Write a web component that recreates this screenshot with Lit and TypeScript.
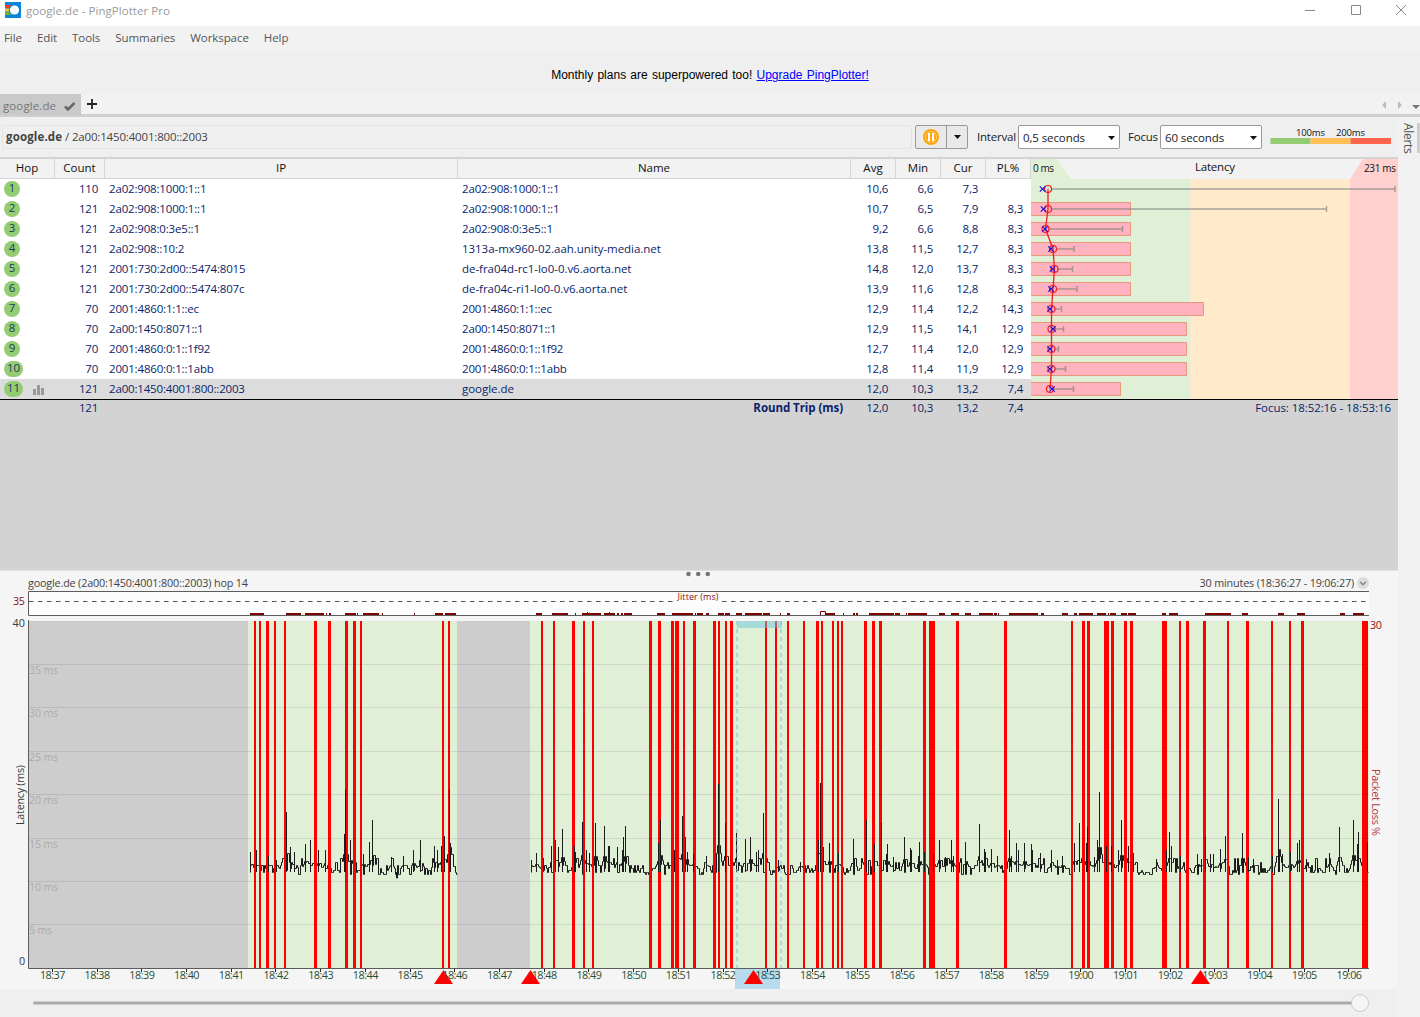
import { LitElement, html, svg, css } from "lit";
import { customElement } from "lit/decorators.js";

type Hop = {
  n: number; count: string; ip: string; name: string;
  avg: string; min: string; cur: string; pl: string;
  ax: number; cx: number; mx: number; bar: number;
};

const H = (n: number, count: string, ip: string, name: string, avg: string, min: string, cur: string, pl: string,
  ax: number, cx: number, mx: number, bar: number): Hop => ({ n, count, ip, name, avg, min, cur, pl, ax, cx, mx, bar });

const HOPS: Hop[] = [
  H(1, "110", "2a02:908:1000:1::1", "2a02:908:1000:1::1", "10,6", "6,6", "7,3", "", 1048, 1042.5, 1395, 0),
  H(2, "121", "2a02:908:1000:1::1", "2a02:908:1000:1::1", "10,7", "6,5", "7,9", "8,3", 1048, 1043.5, 1326.5, 1131),
  H(3, "121", "2a02:908:0:3e5::1", "2a02:908:0:3e5::1", "9,2", "6,6", "8,8", "8,3", 1045.5, 1045, 1122.5, 1131),
  H(4, "121", "2a02:908::10:2", "1313a-mx960-02.aah.unity-media.net", "13,8", "11,5", "12,7", "8,3", 1053, 1051, 1074, 1131),
  H(5, "121", "2001:730:2d00::5474:8015", "de-fra04d-rc1-lo0-0.v6.aorta.net", "14,8", "12,0", "13,7", "8,3", 1054.5, 1052.5, 1072.5, 1131),
  H(6, "121", "2001:730:2d00::5474:807c", "de-fra04c-ri1-lo0-0.v6.aorta.net", "13,9", "11,6", "12,8", "8,3", 1053, 1051, 1077, 1131),
  H(7, "70", "2001:4860:1:1::ec", "2001:4860:1:1::ec", "12,9", "11,4", "12,2", "14,3", 1051.5, 1050, 1061.5, 1204),
  H(8, "70", "2a00:1450:8071::1", "2a00:1450:8071::1", "12,9", "11,5", "14,1", "12,9", 1051.5, 1053, 1063.5, 1187),
  H(9, "70", "2001:4860:0:1::1f92", "2001:4860:0:1::1f92", "12,7", "11,4", "12,0", "12,9", 1051.5, 1050, 1058.5, 1187),
  H(10, "70", "2001:4860:0:1::1abb", "2001:4860:0:1::1abb", "12,8", "11,4", "11,9", "12,9", 1051.5, 1050, 1065.5, 1187),
  H(11, "121", "2a00:1450:4001:800::2003", "google.de", "12,0", "10,3", "13,2", "7,4", 1050, 1052, 1073.5, 1121),
];

/* Lost-packet bars as x, width pairs. */
const LOSS = [254,2,259,2,266,3,274,2,284,2,314,3,328,3,345,3,353,3,360,2,442,2,448,2,541,2,553,2,572,3,583,2,592,2,
  649,3,658,3,671,3,675,4,683,2,693,3,713,3,718,2,725,2,730,3,765,2,775,2,787,2,803,2,816,3,821,2,832,2,837,2,841,2,
  864,3,872,3,879,3,923,3,929,6,956,3,1004,3,1071,2,1082,3,1087,3,1104,5,1111,3,1124,3,1130,3,1162,5,1179,2,1186,3,
  1203,3,1227,2,1246,3,1271,2,1289,2,1301,3,1362,6];

/* Jitter segments as x, width pairs. */
const JITTER = [250,14,286,15,305,19,326,1,329,2,345,11,357,1,363,16,382,1,414,1,435,8,445,11,536,6,552,16,575,1,582,19,
  604,11,617,2,621,2,624,8,657,8,672,21,695,1,697,6,706,3,718,6,725,5,736,6,745,17,763,7,780,1,787,3,826,9,843,1,853,2,
  856,2,869,25,895,5,906,1,908,19,939,6,951,8,965,6,979,14,994,3,998,1,1009,29,1041,3,1062,6,1074,3,1079,14,1097,9,
  1108,1,1110,6,1121,6,1128,8,1162,4,1169,9,1205,26,1242,6,1278,6,1297,8,1340,5,1353,11];

/* Latency spikes as x, top pairs. */
const SPIKES = [250,852,256,850,268,856,276,860,286,812,290,847,294,852,305,844,310,840,318,850,325,850,344,834,345,789,
  350,840,363,854,369,842,372,820,391,857,403,856,413,850,420,840,434,846,437,850,441,846,444,836,449,790,450,843,
  531,860,536,853,543,858,551,846,555,840,558,847,562,829,574,846,575,852,582,822,586,850,589,853,595,823,604,826,
  608,846,609,846,617,847,622,850,623,837,625,826,658,843,660,820,674,850,682,816,685,837,687,852,693,854,706,856,
  718,784,725,823,736,833,745,839,750,837,756,852,758,850,763,813,778,860,800,862,818,840,820,783,823,847,829,843,
  838,853,853,839,866,820,874,844,881,823,886,854,887,844,893,857,904,837,910,848,911,850,918,856,919,842,924,852,
  933,854,939,840,945,857,951,840,953,856,965,842,979,824,984,849,985,852,991,849,997,856,1009,830,1011,856,1016,843,
  1018,850,1024,843,1031,844,1032,850,1040,853,1051,850,1057,860,1062,856,1074,843,1079,823,1086,843,1087,827,1094,857,
  1097,840,1099,792,1106,846,1111,846,1118,850,1121,820,1128,846,1133,853,1156,859,1166,850,1169,832,1171,846,1180,856,
  1197,854,1201,859,1205,837,1210,854,1213,854,1220,849,1225,836,1242,833,1248,857,1253,859,1272,856,1278,799,1279,850,
  1282,854,1290,852,1297,843,1299,840,1306,859,1329,853,1339,827,1353,820,1357,844,1358,832,1367,843];

const pairs = (a: number[]) => a.filter((_, i) => i % 2 === 0).map((x, i) => [x, a[i * 2 + 1]]);

/* Stepped baseline between two x positions; heights come from a small seeded generator. */
function trace(from: number, to: number): string {
  let s = from * 7919;
  const rnd = () => ((s = (s * 1103515245 + 12345) % 2147483648) / 2147483648);
  const top = new Map(pairs(SPIKES) as [number, number][]);
  let d = `M${from} 873`;
  let x = from;
  while (x < to) {
    const r = rnd();
    let y = r < 0.3 ? 873 : r < 0.48 ? 871 : r < 0.63 ? 869 : r < 0.79 ? 875 : r < 0.91 ? 866 : r < 0.96 ? 863 : 859;
    for (let k = -3; k <= 3; k++) {
      const t = top.get(x + k);
      if (t !== undefined && k !== 0) y = Math.min(y, 870 - ((872 - t) * (4 - Math.abs(k))) / 11);
    }
    d += `V${Math.round(y)}`;
    x += rnd() < 0.72 ? 1 : 2;
    d += `H${Math.min(x, to)}`;
  }
  return d;
}

@customElement("hop-table")
class HopTable extends LitElement {
  static styles = css`
    :host { display: flex; height: 241px; color: #0a1e6a; }
    .grid { width: 1031px; background: #fff; }
    .row { display: grid; grid-template-columns: 55px 50px 353px 393px 45px 45px 45px 45px; height: 20px; line-height: 19px; }
    .head { background: #f2f2f2; color: #111; text-align: center; line-height: 18px; }
    .head span { border-right: 1px solid #d6d6d6; border-bottom: 1px solid #d6d6d6; height: 19px; }
    .sel { background: #dcdcdc; }
    .num { text-align: right; padding-right: 8px; letter-spacing: -.25px; }
    .row .count { padding-right: 7px; }
    .txt { padding-left: 4px; letter-spacing: -.17px; }
    .host { letter-spacing: -.04px; }
    .hop { display: flex; align-items: center; padding-left: 4px; gap: 10px; }
    .dot { min-width: 16px; height: 16px; box-sizing: border-box; border-radius: 8px; background: #94cc73; color: #1c3c5c; text-align: center; line-height: 14px; }
    .wide { width: 19px; }
    .stat { margin-top: 1px; }
    svg { display: block; }
    text { font-family: "Open Sans", "Noto Sans", sans-serif; fill: #111; }
  `;
  render() {
    const cy = (h: Hop) => 169 + h.n * 20;
    return html`
      <div class="grid">
        <div class="row head">${["Hop", "Count", "IP", "Name", "Avg", "Min", "Cur", "PL%"].map((t) => html`<span>${t}</span>`)}</div>
        ${HOPS.map((h) => html`
          <div class="row ${h.n === 11 ? "sel" : ""}">
            <span class="hop"><span class="dot ${h.n > 9 ? "wide" : ""}">${h.n}</span>
              ${h.n === 11 ? html`<svg class="stat" width="11" height="10" viewBox="0 0 11 10" fill="#999"><path d="M0 4h3v6H0zM4 0h3v10H4zM8 3h3v7H8z"/></svg>` : ""}</span>
            <span class="num count">${h.count}</span><span class="txt">${h.ip}</span><span class="txt ${/[g-z]/.test(h.name) ? "host" : ""}">${h.name}</span>
            <span class="num">${h.avg}</span><span class="num">${h.min}</span><span class="num">${h.cur}</span><span class="num">${h.pl}</span>
          </div>`)}
      </div>
      <svg width="367" height="241" viewBox="1031 159 367 241">
        <rect x="1031" y="159" width="367" height="20" fill="#f2f2f2"/>
        <rect x="1031" y="179" width="159.500" height="220" fill="#dff0d6"/>
        <rect x="1190.500" y="179" width="159.500" height="220" fill="#ffeacc"/>
        <rect x="1350" y="179" width="48" height="220" fill="#ffd0cd"/>
        <path d="M1031 159h26l14 20h-40z" fill="#dff0d6"/>
        <path d="M1363 159h35v20h-48z" fill="#ffd0cd"/>
        <text x="1033" y="172" font-size="10" textLength="21">0 ms</text>
        <text x="1195" y="170.500" font-size="11.500" textLength="40">Latency</text>
        <text x="1364" y="172" font-size="10" textLength="32">231 ms</text>
        ${HOPS.filter((h) => h.bar).map((h) => svg`<path d="M1031 ${cy(h) - 6.5}H${h.bar - 0.5}v13H1031" fill="#ffb3be" stroke="#e9967a"/>`)}
        ${HOPS.map((h) => svg`<path d="M${h.ax + 3} ${cy(h)}H${h.mx}M${h.mx} ${cy(h) - 3}v6" stroke="#808080" stroke-opacity=".68" stroke-width="1.500" fill="none"/>`)}
        <polyline points=${HOPS.map((h) => `${h.ax},${cy(h)}`).join(" ")} fill="none" stroke="#f21c1c" stroke-width="1.300"/>
        ${HOPS.map((h) => svg`
          <circle cx=${h.ax} cy=${cy(h)} r="3.500" fill="none" stroke="#f21c1c" stroke-width="1.200"/>
          <path d="M${h.cx - 2.7} ${cy(h) - 2.7}l5.4 5.4m0-5.400l-5.400 5.400" stroke="#1414e6" stroke-width="1.200"/>`)}
        <rect x="1031" y="399" width="367" height="1" fill="#d3d3d3"/>
      </svg>`;
  }
}

@customElement("time-graph")
class TimeGraph extends LitElement {
  static styles = css`
    :host { display: block; height: 418px; background: #f5f5f5; color: #444; position: relative; }
    .title { display: flex; align-items: center; height: 20px; padding: 4px 29px 0 28px; box-sizing: border-box; }
    .title span { font-size: 10.8px; letter-spacing: -.17px; line-height: 14px; flex: 1; white-space: nowrap; }
    .title .range { text-align: right; padding-right: 3px; }
    .grip { position: absolute; left: 686px; top: 0; }
    svg { display: block; }
    text { font-family: "Open Sans", "Noto Sans", sans-serif; font-size: 10.8px; fill: #3c3c3c; }
    .mark { fill: #777; fill-opacity: .42; font-size: 10.5px; }
    .time { fill: #2a4d2e; }
    .dark { fill: #8b0f14; }
    .small { font-size: 9px; }
    .loss { fill: #b83a40; }
  `;
  render() {
    const grid = [664, 707, 751, 794, 838, 881, 924];
    const ticks = Array.from({ length: 30 }, (_, i) => {
      const m = 37 + i;
      return { x: 52.4 + i * 44.71, t: `${18 + Math.floor(m / 60)}:${String(m % 60).padStart(2, "0")}` };
    });
    return html`
      <svg class="grip" width="26" height="6" viewBox="0 0 26 6" fill="#777"><circle cx="2.500" cy="3" r="2.300"/><circle cx="12.200" cy="3" r="2.300"/><circle cx="21.800" cy="3" r="2.300"/></svg>
      <div class="title">
        <span>google.de (2a00:1450:4001:800::2003) hop 14</span>
        <span class="range">30 minutes (18:36:27 - 19:06:27)</span>
        <svg width="12" height="12" viewBox="0 0 12 12"><circle cx="6" cy="6" r="6" fill="#dcdcdc"/><path d="M3 4.800l3 3 3-3" fill="none" stroke="#888" stroke-width="1.400"/></svg>
      </div>
      <svg width="1398" height="398" viewBox="0 591 1398 398">
        <rect x="28" y="591" width="1341" height="25" fill="#fcfcfc"/>
        <path d="M1369 591.500H28.500v24H1369" fill="none" stroke="#5c5c5c"/>
        <path d="M29 601.500H1368" stroke="#555" stroke-dasharray="4.500 4.500"/>
        <rect x="676" y="594" width="44" height="8.500" fill="#fcfcfc"/>
        <text class="dark small" x="677.500" y="600" textLength="41">Jitter (ms)</text>
        ${pairs(JITTER).map(([x, w]) => svg`<rect x=${x} y="613" width=${w} height="2" fill="#800000"/>`)}
        <path d="M820.500 615v-3.500h5v3.500M587.500 612v2M609.500 612v2" fill="none" stroke="#800000"/>
        <text class="dark" x="13" y="605" textLength="12">35</text>
        <text x="12.500" y="627" textLength="12.500">40</text>
        <text x="19" y="965">0</text>
        <text class="dark" x="1370" y="629" textLength="12">30</text>

        <rect x="29" y="621" width="1340" height="347" fill="#cdcdcd"/>
        <rect x="248" y="621" width="209" height="347" fill="#dff0d6"/>
        <rect x="530" y="621" width="839" height="347" fill="#dff0d6"/>
        <path d="${trace(250, 457)}${trace(531, 1368)}" transform="translate(.5 -.5)" fill="none" stroke="#1c1c1c"/>
        ${pairs(LOSS).map(([x, w]) => svg`<rect x=${x} y="621" width=${w} height="347" fill="#f00"/>`)}
        ${pairs(SPIKES).map(([x, y]) => svg`<rect x=${x} y=${y} width="1" height=${872 - y} fill="#1c1c1c"/>`)}
        <path d="M396.500 872v6h1v-6" fill="none" stroke="#1c1c1c"/>
        ${grid.map((y) => svg`<rect x="29" y=${y} width="1340" height="1" fill="#000" fill-opacity=".09"/>`)}
        ${grid.map((y, i) => svg`<text class="mark" x="29" y=${y + 10} textLength=${i === 6 ? 23 : 29}>${35 - i * 5} ms</text>`)}
        <rect x="737" y="621" width="45" height="7" fill="#6ec5dc" fill-opacity=".5"/>
        <path d="M737 621V968M781 621V968" stroke="#6ec5dc" stroke-opacity=".52" stroke-width="2" stroke-dasharray="4 4"/>
        <path d="M28.500 620V968.500H1369" fill="none" stroke="#5c5c5c"/>
        <rect x="735" y="969" width="45" height="20" fill="#b8dcee"/>
        ${[443.5, 530.5, 753.5, 1200.5].map((x) => svg`<path d="M${x} 970l9.500 14h-19z" fill="#f00"/>`)}
        ${ticks.map(({ x, t }) => svg`
          <rect x=${Math.floor(x)} y="969" width="1" height="3" fill="#222"/>
          <text class="time" x=${x - 12.5} y="979" textLength="25.500">${t}</text>`)}
        <text transform="translate(24 825) rotate(-90)" textLength="60">Latency (ms)</text>
        <text class="loss" transform="translate(1372 769) rotate(90)" textLength="67">Packet Loss %</text>
      </svg>`;
  }
}

@customElement("app-root")
class AppRoot extends LitElement {
  static styles = css`
    :host { display: block; width: 1420px; height: 1017px; overflow: hidden; background: #efefef; font: 11.5px/16px "Open Sans", "Noto Sans", sans-serif; color: #1a1a1a; }
    svg { display: block; }
    .title { display: flex; align-items: center; height: 26px; background: #fff; color: #999; padding: 0 14px 6px 5px; box-sizing: border-box; gap: 5px; }
    .title .name { flex: 1; letter-spacing: .05px; padding-top: 1px; }
    .controls { display: flex; gap: 35.5px; }
    .menu { display: flex; height: 24px; line-height: 24px; background: #f2f2f2; color: #555; padding-left: 4px; gap: 15px; letter-spacing: -.07px; }
    .banner { height: 44px; line-height: 50px; text-align: center; font-family: "Liberation Sans", Arial, sans-serif; font-size: 12px; color: #000; word-spacing: .9px; }
    .banner a { color: #00f; text-decoration: underline; }
    .tabs { display: flex; height: 20px; background: #f2f2f2; border-bottom: 3px solid #d0d0d0; }
    .tab { display: flex; align-items: center; gap: 8px; width: 81px; height: 21px; background: #c9c9c9; color: #777; padding-left: 3px; box-sizing: border-box; padding-top: 3px; }
    .tab span { letter-spacing: .1px; }
    .plus { padding: 5px 0 0 6px; flex: 1; }
    .arrows { padding-top: 7px; }
    .body { display: flex; height: 900px; }
    .main { width: 1398px; }
    .side { flex: 1; background: #f1f1f1; display: flex; justify-content: space-between; padding-top: 6px; }
    .alerts { writing-mode: vertical-rl; font-size: 12px; color: #555; line-height: 16px; letter-spacing: -.3px; padding-left: 2px; }
    .handle { width: 3px; height: 30px; background: #cdcdcd; }
    .bar { display: flex; align-items: center; height: 42px; box-sizing: border-box; border-bottom: 2px solid #d3d3d3; padding-left: 2px; }
    .addr { width: 910px; height: 24px; line-height: 22px; box-sizing: border-box; border: 1px solid #e4e4e4; border-radius: 2px; padding-left: 3px; color: #444; letter-spacing: -.17px; }
    .addr b { letter-spacing: .15px; }
    .pause { display: flex; width: 53px; height: 24px; margin-left: 3px; box-sizing: border-box; border: 1px solid #999; border-radius: 2px; background: #e9e9e9; }
    .pause div { display: flex; align-items: center; justify-content: center; flex: 1; }
    .pause div + div { flex: 0 0 20px; border-left: 1px solid #999; }
    .lab { margin-left: 9px; width: 41px; letter-spacing: -.2px; }
    .lab.f { margin-left: 8px; width: 32px; }
    .sel { display: flex; align-items: center; justify-content: space-between; width: 102px; height: 24px; box-sizing: border-box; border: 1px solid #999; border-radius: 2px; background: #fff; padding: 2px 4px 0; letter-spacing: -.1px; }
    .legend { margin-left: 8px; }
    .legend text { font: 9.5px "Open Sans", "Noto Sans", sans-serif; fill: #111; }
    .total { display: grid; grid-template-columns: 105px 746px 45px 45px 45px 45px 1fr; height: 172px; box-sizing: border-box; border-top: 1px solid #000; border-bottom: 1px solid #e2e2e2; background: #d3d3d3; color: #0a1e6a; text-align: right; margin-top: -1px; position: relative; }
    .total span { padding-right: 8px; letter-spacing: -.25px; }
    .total .count { padding-right: 7px; }
    .total .rt { letter-spacing: -.06px; }
    .total .foc { letter-spacing: -.07px; padding-right: 7px; }
    .slider { display: flex; align-items: center; height: 28px; padding-left: 33px; }
    .track { width: 1318px; height: 2px; background: #a8a8a8; border: 1px solid #cfcfcf; box-sizing: content-box; }
    .thumb { width: 18px; height: 18px; box-sizing: border-box; border: 1px solid #ccc; border-radius: 50%; background: #f5f5f5; margin-left: -2px; }
  `;
  render() {
    const caret = html`<svg width="7" height="4" viewBox="0 0 7 4"><path d="M0 0h7L3.500 4z" fill="#111"/></svg>`;
    return html`
      <div class="title">
        <svg width="16" height="16" viewBox="0 0 16 16"><rect width="16" height="16" fill="#0c84dc"/><rect y="3" width="6" height="3" fill="#f43b1e"/><rect y="6.500" width="6" height="3" fill="#ffc21e"/><rect y="10" width="6" height="3" fill="#5fb82e"/><circle cx="9.500" cy="8" r="5.700" fill="#0c84dc"/><circle cx="9.500" cy="8" r="4.600" fill="#fff"/></svg>
        <span class="name">google.de - PingPlotter Pro</span>
        <div class="controls">
          <svg width="10" height="10" viewBox="0 0 10 10"><path d="M0 5.500h10" stroke="#888"/></svg>
          <svg width="10" height="10" viewBox="0 0 10 10"><path d="M.5.5h9v9h-9z" fill="none" stroke="#888"/></svg>
          <svg width="10" height="10" viewBox="0 0 10 10"><path d="M0 0l10 10M10 0L0 10" stroke="#888"/></svg>
        </div>
      </div>
      <div class="menu">${["File", "Edit", "Tools", "Summaries", "Workspace", "Help"].map((t) => html`<span>${t}</span>`)}</div>
      <div class="banner">Monthly plans are superpowered too! <a>Upgrade PingPlotter!</a></div>
      <div class="tabs">
        <div class="tab"><span>google.de</span><svg width="12" height="9" viewBox="0 0 12 9"><path d="M1 4.500l3 3L10.500 1" fill="none" stroke="#666" stroke-width="2.500"/></svg></div>
        <div class="plus"><svg width="10" height="10" viewBox="0 0 10 10"><path d="M5 0v10M0 5h10" stroke="#222" stroke-width="1.800"/></svg></div>
        <svg class="arrows" width="38" height="9" viewBox="0 0 38 9"><path d="M4 0v8L0 4zM16 0v8l4-4z" fill="#bbb"/><path d="M30 4h8l-4 4z" fill="#777"/></svg>
      </div>
      <div class="body">
        <div class="main">
          <div class="bar">
            <div class="addr"><b>google.de</b> / 2a00:1450:4001:800::2003</div>
            <div class="pause">
              <div><svg width="16" height="16" viewBox="0 0 16 16"><circle cx="8" cy="8" r="8" fill="#ffa50a"/><circle cx="8" cy="8" r="5.500" fill="none" stroke="#fff" stroke-opacity=".55" stroke-width=".8"/><path d="M6 4v8M10 4v8" stroke="#fff" stroke-width="2"/></svg></div>
              <div>${caret}</div>
            </div>
            <span class="lab">Interval</span><div class="sel"><span>0,5 seconds</span>${caret}</div>
            <span class="lab f">Focus</span><div class="sel"><span>60 seconds</span>${caret}</div>
            <svg class="legend" width="122" height="20" viewBox="1270 127 122 20">
              <text x="1296" y="136" textLength="29">100ms</text><text x="1336" y="136" textLength="29">200ms</text>
              <rect x="1270.500" y="138" width="40" height="6" fill="#94cc73"/><rect x="1310.500" y="138" width="40" height="6" fill="#ffc057"/><rect x="1350.500" y="138" width="40.500" height="6" fill="#ff654d"/>
            </svg>
          </div>
          <hop-table></hop-table>
          <div class="total">
            <span class="count">121</span><span class="rt"><b>Round Trip (ms)</b></span><span>12,0</span><span>10,3</span><span>13,2</span><span>7,4</span><span class="foc">Focus: 18:52:16 - 18:53:16</span>
          </div>
          <time-graph></time-graph>
          <div class="slider"><div class="track"></div><div class="thumb"></div></div>
        </div>
        <div class="side"><span class="alerts">Alerts</span><div class="handle"></div></div>
      </div>`;
  }
}
